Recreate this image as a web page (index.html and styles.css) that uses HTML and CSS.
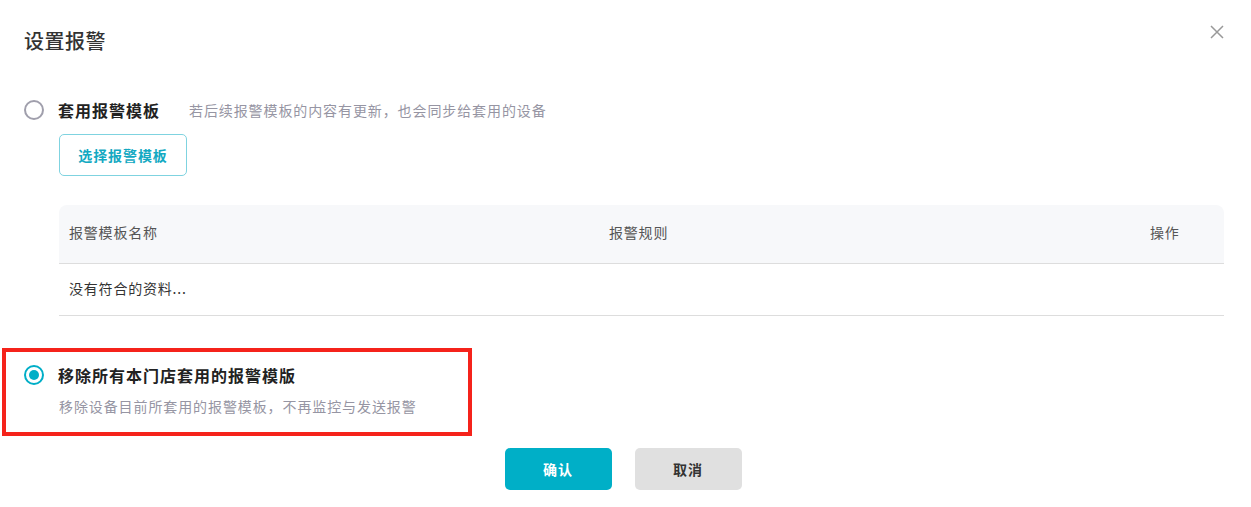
FILE: index.html
```html
<!DOCTYPE html>
<html lang="zh-CN">
<head>
<meta charset="utf-8">
<title>设置报警</title>
<link rel="stylesheet" href="styles.css">
</head>
<body>
<div class="dialog">
  <div class="dialog-head">
    <h1 class="title">设置报警</h1>
    <button class="close" aria-label="关闭">
      <svg width="14" height="14" viewBox="0 0 14 14"><path d="M1 1L13 13M13 1L1 13" stroke="#999" stroke-width="1.5" fill="none"/></svg>
    </button>
  </div>

  <div class="option">
    <span class="radio"></span>
    <span class="opt-label">套用报警模板</span>
    <span class="opt-hint">若后续报警模板的内容有更新，也会同步给套用的设备</span>
  </div>

  <div class="indent">
    <button class="btn-outline">选择报警模板</button>

    <div class="table">
      <div class="thead">
        <div class="cell">报警模板名称</div>
        <div class="cell">报警规则</div>
        <div class="cell">操作</div>
      </div>
      <div class="tbody">
        <div class="cell">没有符合的资料...</div>
      </div>
    </div>
  </div>

  <div class="option-box">
    <div class="option">
      <span class="radio checked"></span>
      <span class="opt-label">移除所有本门店套用的报警模版</span>
    </div>
    <div class="opt-desc">移除设备目前所套用的报警模板，不再监控与发送报警</div>
  </div>

  <div class="footer">
    <button class="btn btn-primary">确认</button>
    <button class="btn btn-gray">取消</button>
  </div>
</div>
</body>
</html>
```

FILE: styles.css
```css
* { box-sizing: border-box; }
html, body {
  margin: 0;
  padding: 0;
  background: #fff;
  font-family: "Noto Sans CJK SC", "Noto Sans", sans-serif;
  color: #333;
}
.dialog {
  width: 1251px;
  height: 507px;
  padding: 27px 27px 0 24px;
}
.dialog-head {
  display: flex;
  justify-content: space-between;
  align-items: flex-start;
}
.title {
  margin: 0;
  font-size: 20px;
  line-height: 28px;
  font-weight: 500;
  letter-spacing: 0.5px;
  color: #333;
}
.close {
  border: 0;
  background: none;
  padding: 0;
  margin-top: -2px;
  width: 14px;
  height: 14px;
  display: block;
}
.close svg { display: block; }

.option {
  display: flex;
  align-items: center;
  height: 24px;
  margin-top: 43px;
}
.radio {
  width: 20px;
  height: 20px;
  border-radius: 50%;
  border: 2px solid #a09fac;
  flex: none;
  position: relative;
}
.radio.checked {
  border-color: #00aec7;
}
.radio.checked::after {
  content: "";
  position: absolute;
  left: 3px;
  top: 3px;
  width: 10px;
  height: 10px;
  border-radius: 50%;
  background: #00aec7;
}
.opt-label {
  margin-left: 14px;
  font-size: 16px;
  font-weight: 700;
  letter-spacing: 1px;
  color: #222;
}
.opt-hint {
  margin-left: 29px;
  font-size: 14px;
  letter-spacing: 0.9px;
  color: #9695a3;
}
.indent {
  padding-left: 35px;
}
.btn-outline {
  margin-top: 12px;
  display: block;
  width: 128px;
  height: 42px;
  border: 1px solid #7fd3e0;
  border-radius: 5px;
  background: #fff;
  color: #13a9c2;
  font-family: inherit;
  font-size: 14px;
  font-weight: 700;
  letter-spacing: 0.9px;
  padding: 0;
}
.table {
  margin-top: 29px;
  width: 1165px;
  font-size: 14px;
  letter-spacing: 0.8px;
}
.thead {
  display: grid;
  grid-template-columns: 540px 541px 1fr;
  height: 59px;
  padding-bottom: 4px;
  background: #f7f8fa;
  border-radius: 8px 8px 0 0;
  border-bottom: 1px solid #dddddd;
  align-items: center;
  color: #555;
}
.cell {
  padding-left: 10px;
}
.tbody {
  height: 52px;
  padding-bottom: 4px;
  display: flex;
  align-items: center;
  border-bottom: 1px solid #dddddd;
  color: #333;
}
.option-box {
  margin-top: 32px;
  margin-left: -22px;
  width: 470px;
  border: 4px solid #f5231b;
  padding: 11px 0 16px 18px;
}
.option-box .option {
  margin-top: 0;
}
.opt-desc {
  margin-top: 9px;
  margin-left: 35px;
  font-size: 14px;
  line-height: 20px;
  letter-spacing: 0.9px;
  color: #9695a3;
}
.footer {
  display: flex;
  justify-content: center;
  gap: 23px;
  margin-top: 12px;
  padding-right: 2px;
}
.btn {
  width: 107px;
  height: 42px;
  border: 0;
  border-radius: 5px;
  font-family: inherit;
  font-size: 14px;
  font-weight: 700;
  letter-spacing: 0.9px;
  padding: 0;
}
.btn-primary {
  background: #00afc7;
  color: #fff;
}
.btn-gray {
  background: #e0e0e0;
  color: #333;
}
```
